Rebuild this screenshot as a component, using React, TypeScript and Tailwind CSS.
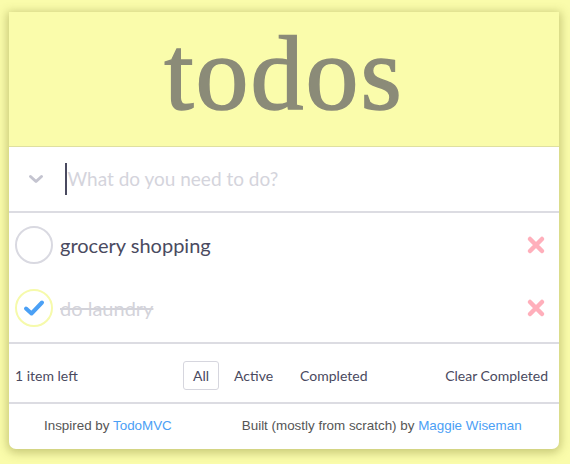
import { useState } from "react";

interface Todo {
  id: number;
  title: string;
  done: boolean;
}

const initialTodos: Todo[] = [
  { id: 1, title: "grocery shopping", done: false },
  { id: 2, title: "do laundry", done: true },
];

const TodoRow = ({ todo }: { todo: Todo }) => {
  return (
    <li className="flex h-[63px] items-center pr-[12px]">
      <span
        className={
          todo.done
            ? "ml-[6px] flex h-[38px] w-[38px] items-center justify-center rounded-full border-[2.5px] border-[#f6faab]"
            : "ml-[6px] flex h-[38px] w-[38px] items-center justify-center rounded-full border-[2.5px] border-[#d9d9e1]"
        }
      >
        {todo.done && (
          <svg width="22" height="18" viewBox="0 0 22 18">
            <path
              d="M3 9.5 L8.5 14.5 L19 3.5"
              fill="none"
              stroke="#4ba0f5"
              strokeWidth="4"
              strokeLinecap="round"
              strokeLinejoin="round"
            />
          </svg>
        )}
      </span>
      <span
        className={
          todo.done
            ? "ml-[7px] flex-1 text-[20px] text-[#d3d3da] line-through"
            : "ml-[7px] flex-1 text-[20px] text-[#4a4a60]"
        }
      >
        {todo.title}
      </span>
      <svg width="20" height="20" viewBox="0 0 20 20" className="mr-[1px]">
        <path
          d="M4 4 L16 16 M16 4 L4 16"
          stroke="#ffafbb"
          strokeWidth="4.5"
          strokeLinecap="round"
        />
      </svg>
    </li>
  );
};

export default function App() {
  const [todos] = useState(initialTodos);
  const left = todos.filter((t) => !t.done).length;

  return (
    <div
      className="min-h-[464px] bg-[#fafcab] pt-[12px] pl-[9px]"
      style={{ fontFamily: "Lato, 'Open Sans', sans-serif" }}
    >
      <div className="w-[550px] overflow-hidden rounded-b-[7px] bg-white shadow-[0_2px_10px_2px_rgba(140,140,60,0.45)]">
        <header className="flex h-[135px] items-center justify-center border-b border-[#dfe0a0] bg-[#fafcab]">
          <h1
            className="mb-[10px] text-[106px] leading-none font-normal tracking-[2px] text-[#8b8b78]"
            style={{ fontFamily: "'Liberation Serif', serif", WebkitTextStroke: "1.5px #8b8b78" }}
          >
            todos
          </h1>
        </header>

        <div className="flex h-[66px] items-center border-b-2 border-[#dcdce2]">
          <svg width="16" height="10" viewBox="0 0 16 10" className="ml-[19px]">
            <path
              d="M2.5 2.5 L8 7.5 L13.5 2.5"
              fill="none"
              stroke="#c4c4d0"
              strokeWidth="3"
              strokeLinecap="round"
              strokeLinejoin="round"
            />
          </svg>
          <span className="ml-[21px] h-[32px] w-[1.5px] bg-[#4a4a60]" />
          <span className="ml-[1px] text-[19px] text-[#d4d4dc]">
            What do you need to do?
          </span>
        </div>

        <ul className="pb-[3px]">
          {todos.map((t) => (
            <TodoRow key={t.id} todo={t} />
          ))}
        </ul>

        <div className="flex h-[62px] items-center border-y-2 border-[#dcdce2] px-[6px] pt-[5px] text-[14px] text-[#4a4a60]">
          <span className="w-[168px]">{left} item left</span>
          <div className="flex items-center gap-[4px]">
            <span className="rounded-[3px] border border-[#d6d6de] px-[9px] py-[3px]">
              All
            </span>
            <span className="px-[11px] py-[3px]">Active</span>
            <span className="px-[12px] py-[3px]">Completed</span>
          </div>
          <span className="ml-auto mr-[5px]">Clear Completed</span>
        </div>

        <div
          className="flex h-[45px] items-center pl-[35px] text-[13.4px] text-[#555]"
          style={{ fontFamily: "'Liberation Sans', Arial, sans-serif" }}
        >
          <span>
            Inspired by <span className="text-[#4ba0f5]">TodoMVC</span>
          </span>
          <span className="ml-[70px]">
            Built (mostly from scratch) by{" "}
            <span className="text-[#4ba0f5]">Maggie Wiseman</span>
          </span>
        </div>
      </div>
    </div>
  );
}
